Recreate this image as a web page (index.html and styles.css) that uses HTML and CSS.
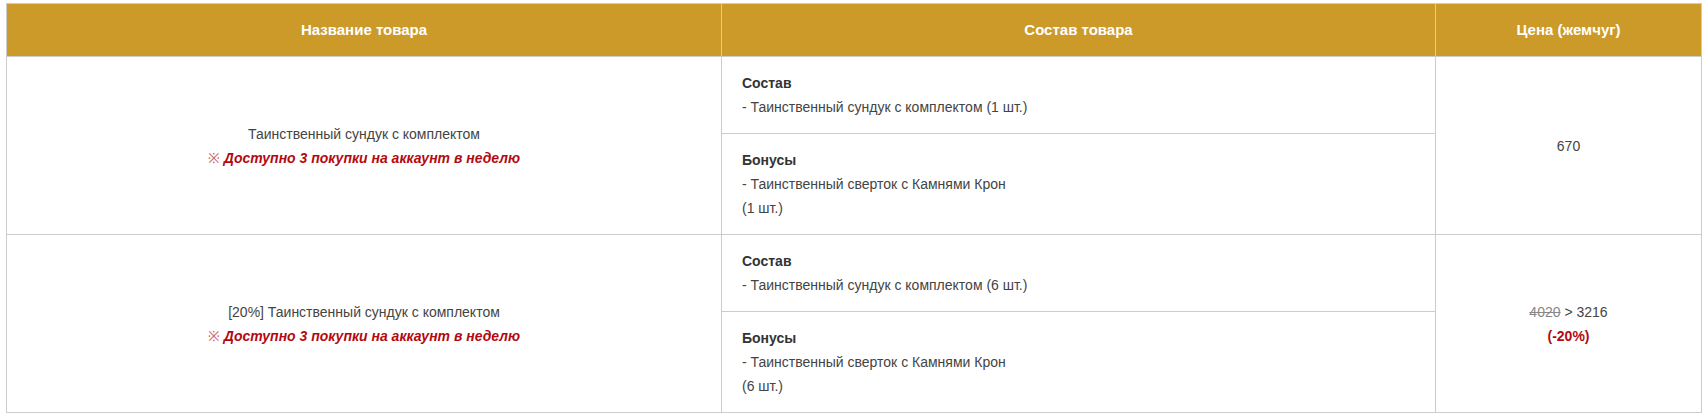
FILE: index.html
```html
<!DOCTYPE html>
<html lang="ru">
<head>
<meta charset="utf-8">
<title>Товары</title>
<link rel="stylesheet" href="styles.css">
</head>
<body>
<div class="wrap">
<table class="shop">
  <colgroup>
    <col class="c-name">
    <col class="c-items">
    <col class="c-price">
  </colgroup>
  <thead>
    <tr>
      <th>Название товара</th>
      <th>Состав товара</th>
      <th>Цена (жемчуг)</th>
    </tr>
  </thead>
  <tbody>
    <tr>
      <td class="name" rowspan="2">Таинственный сундук с комплектом<br><span class="limit"><span class="mark">※</span> Доступно 3 покупки на аккаунт в неделю</span></td>
      <td class="items"><b>Состав</b><br>- Таинственный сундук с комплектом (1 шт.)</td>
      <td class="price" rowspan="2">670</td>
    </tr>
    <tr>
      <td class="items"><b>Бонусы</b><br>- Таинственный сверток с Камнями Крон<br>(1 шт.)</td>
    </tr>
    <tr>
      <td class="name" rowspan="2">[20%] Таинственный сундук с комплектом<br><span class="limit"><span class="mark">※</span> Доступно 3 покупки на аккаунт в неделю</span></td>
      <td class="items"><b>Состав</b><br>- Таинственный сундук с комплектом (6 шт.)</td>
      <td class="price" rowspan="2"><s class="old">4020</s> &gt; 3216<br><b class="disc">(-20%)</b></td>
    </tr>
    <tr>
      <td class="items"><b>Бонусы</b><br>- Таинственный сверток с Камнями Крон<br>(6 шт.)</td>
    </tr>
  </tbody>
</table>
</div>
</body>
</html>
```
FILE: styles.css
```css
html, body {
  margin: 0;
  padding: 0;
  background: #fff;
}
.wrap {
  padding: 3px 6px 0 6px;
}
.shop {
  width: 100%;
  border-collapse: collapse;
  table-layout: fixed;
  font-family: "Liberation Sans", Arial, sans-serif;
  font-size: 14px;
  line-height: 24px;
  color: #444;
}
.c-name { width: 715px; }
.c-items { width: 714px; }
.c-price { width: 266px; }
.shop th,
.shop td {
  border: 1px solid #cccccc;
}
.shop th {
  background: #cc9a29;
  color: #fff;
  font-size: 15px;
  font-weight: bold;
  padding: 14px 10px;
  text-align: center;
}
.shop td {
  padding: 14px 20px;
  vertical-align: middle;
}
.name,
.price {
  text-align: center;
}
.items {
  text-align: left;
}
.items b {
  color: #333;
}
.limit {
  color: #b30a10;
  font-weight: bold;
  font-style: italic;
}
.mark {
  font-weight: normal;
  font-style: normal;
  color: #d0646a;
}
.old {
  color: #888;
}
.disc {
  color: #b30a10;
}
```
